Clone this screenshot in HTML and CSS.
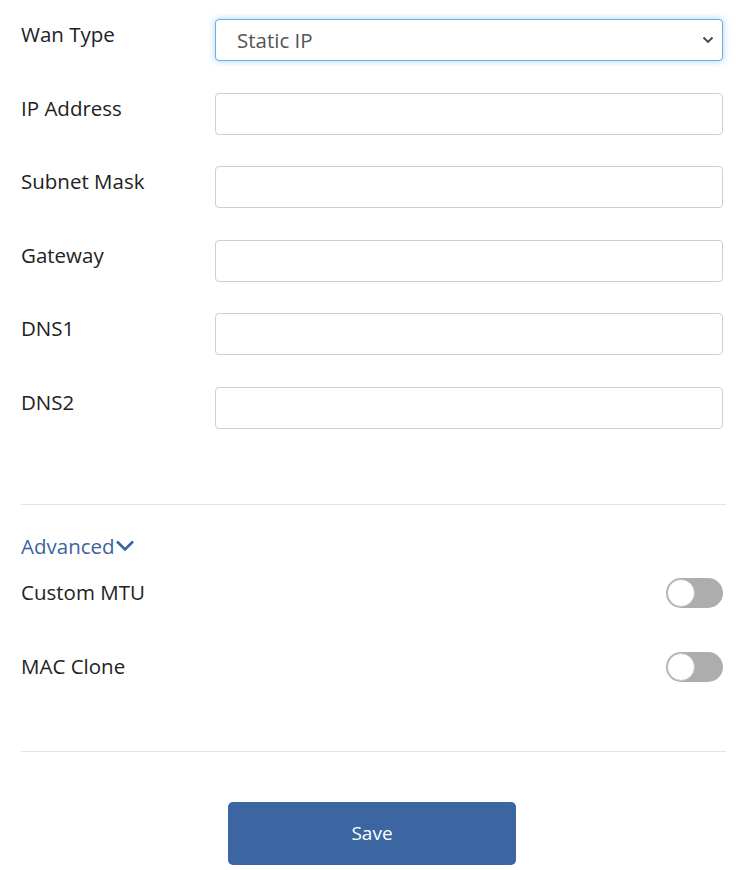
FILE: index.html
```html
<!DOCTYPE html>
<html>
<head>
<meta charset="utf-8">
<link rel="stylesheet" href="styles.css">
</head>
<body>
<div class="page">
  <div class="fields">
    <div class="row">
      <div class="label">Wan Type</div>
      <div class="control select focus">
        <span class="value">Static IP</span>
        <svg class="caret" width="12" height="8" viewBox="0 0 12 8"><path d="M1.5 1.5 L6 6 L10.5 1.5" fill="none" stroke="#444" stroke-width="1.8"/></svg>
      </div>
    </div>
    <div class="row">
      <div class="label">IP Address</div>
      <div class="control"></div>
    </div>
    <div class="row">
      <div class="label">Subnet Mask</div>
      <div class="control"></div>
    </div>
    <div class="row">
      <div class="label">Gateway</div>
      <div class="control"></div>
    </div>
    <div class="row">
      <div class="label">DNS1</div>
      <div class="control"></div>
    </div>
    <div class="row">
      <div class="label">DNS2</div>
      <div class="control"></div>
    </div>
  </div>
  <div class="divider first"></div>
  <div class="advanced">Advanced<svg class="adv-caret" width="20" height="13" viewBox="0 0 20 13"><path d="M2 2.5 L10 10.5 L18 2.5" fill="none" stroke="#3a64a0" stroke-width="2.6"/></svg></div>
  <div class="switch-row mtu">
    <div class="label">Custom MTU</div>
    <div class="toggle"><div class="knob"></div></div>
  </div>
  <div class="switch-row">
    <div class="label">MAC Clone</div>
    <div class="toggle"><div class="knob"></div></div>
  </div>
  <div class="divider second"></div>
  <div class="actions">
    <button class="save">Save</button>
  </div>
</div>
</body>
</html>
```
FILE: styles.css
```css
html, body {
  margin: 0;
  padding: 0;
  background: #fff;
}
body {
  font-family: "Open Sans", "Noto Sans", sans-serif;
  color: #222;
}
.page {
  width: 705px;
  padding: 19px 0 0 21px;
}
.fields {
  display: flex;
  flex-direction: column;
  gap: 31.6px;
  width: 702px;
}
.row {
  display: flex;
  align-items: flex-start;
}
.label {
  width: 194px;
  font-size: 20.5px;
  line-height: 30px;
  color: #222;
}
.control {
  flex: 1;
  height: 42px;
  box-sizing: border-box;
  border: 1px solid #cfcfcf;
  border-radius: 4px;
  background: #fff;
}
.select {
  display: flex;
  align-items: center;
  justify-content: space-between;
  padding: 0 8px 0 21px;
}
.select.focus {
  border-color: #66afe9;
  box-shadow: 0 0 7px rgba(102, 175, 233, 0.55);
}
.value {
  font-size: 20.5px;
  color: #555;
}
.caret {
  display: block;
}
.divider {
  height: 1px;
  background: #e5e5e5;
  width: 705px;
}
.divider.first {
  margin-top: 75px;
}
.advanced {
  margin-top: 27px;
  font-size: 20.5px;
  line-height: 28px;
  color: #3a64a0;
  display: flex;
  align-items: center;
}
.adv-caret {
  display: block;
  margin-left: 0;
  margin-top: -1px;
}
.switch-row {
  display: flex;
  justify-content: space-between;
  align-items: center;
  width: 702px;
  height: 30px;
}
.switch-row.mtu {
  margin-top: 18px;
  margin-bottom: 44px;
}
.switch-row .label {
  width: auto;
  margin-top: -2px;
}
.toggle {
  width: 57px;
  height: 30px;
  border-radius: 15px;
  background: #adadad;
  position: relative;
}
.knob {
  position: absolute;
  left: 1px;
  top: 1px;
  width: 28px;
  height: 28px;
  box-sizing: border-box;
  border-radius: 50%;
  background: #fff;
  border: 1.5px solid #c4c4c4;
}
.divider.second {
  margin-top: 69px;
}
.actions {
  display: flex;
  padding-left: 207px;
  padding-top: 50px;
}
.save {
  width: 288px;
  height: 63px;
  border: 0;
  border-radius: 5px;
  background: #3c66a1;
  color: #fff;
  font-family: "Open Sans", "Noto Sans", sans-serif;
  font-size: 19px;
}
```
